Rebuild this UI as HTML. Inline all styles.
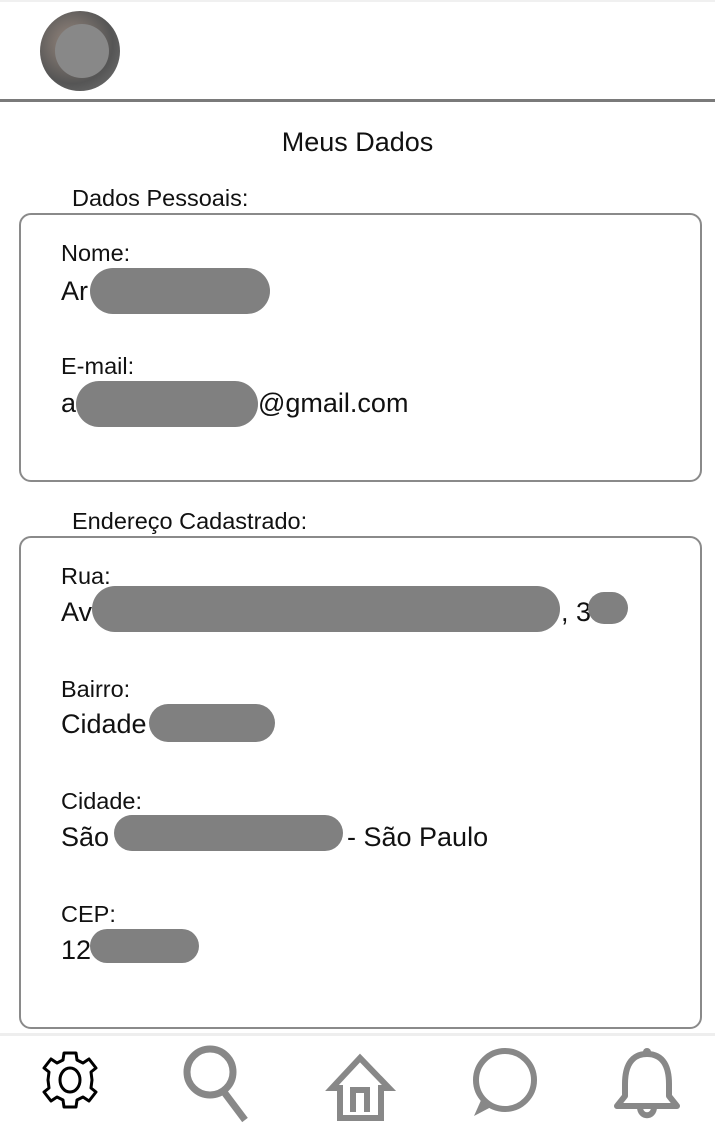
<!DOCTYPE html>
<html><head><meta charset="utf-8"><style>
*{margin:0;padding:0;box-sizing:border-box}
body{width:715px;height:1134px;background:#fff;position:relative;overflow:hidden;font-family:"Liberation Sans",Arial,sans-serif;color:#111}
.a{position:absolute;white-space:nowrap;line-height:1}
.l{font-size:23.5px}
.v{font-size:27px}
.b{position:absolute;background:#808080;border-radius:50%/50%}
.card{position:absolute;left:19px;width:683px;border:2px solid #8a8a8a;border-radius:12px}
</style></head><body>
<div style="position:absolute;left:0;top:0;width:715px;height:2px;background:#f0f0f0"></div>
<div style="position:absolute;left:40px;top:11px;width:80px;height:80px;border-radius:50%;background:radial-gradient(circle at 40% 40%,#9a8a80,#555 60%,#777)"></div>
<div style="position:absolute;left:55px;top:24px;width:54px;height:54px;border-radius:50%;background:#888"></div>
<div style="position:absolute;left:0;top:99px;width:715px;height:3px;background:#7a7a7a"></div>

<div class="a" style="left:0;width:715px;text-align:center;top:129px;font-size:27px">Meus Dados</div>

<div class="a l" style="left:72px;top:187px">Dados Pessoais:</div>
<div class="card" style="top:213px;height:269px"></div>
<div class="a l" style="left:61px;top:242px">Nome:</div>
<div class="a v" style="left:61px;top:278px">Ar</div>
<div class="b" style="left:90px;top:268px;width:180px;height:46px;border-radius:24px"></div>
<div class="a l" style="left:61px;top:355px">E-mail:</div>
<div class="a v" style="left:61px;top:390px">a</div>
<div class="b" style="left:76px;top:381px;width:182px;height:46px;border-radius:24px"></div>
<div class="a v" style="left:258px;top:390px">@gmail.com</div>

<div class="a l" style="left:72px;top:510px">Endereço Cadastrado:</div>
<div class="card" style="top:536px;height:493px"></div>
<div class="a l" style="left:61px;top:565px">Rua:</div>
<div class="a v" style="left:61px;top:599px">Av</div>
<div class="b" style="left:92px;top:586px;width:468px;height:46px;border-radius:24px"></div>
<div class="a v" style="left:561px;top:599px">, 3</div>
<div class="b" style="left:588px;top:592px;width:40px;height:32px;border-radius:16px"></div>
<div class="a l" style="left:61px;top:678px">Bairro:</div>
<div class="a v" style="left:61px;top:711px">Cidade</div>
<div class="b" style="left:149px;top:704px;width:126px;height:38px;border-radius:19px"></div>
<div class="a l" style="left:61px;top:790px">Cidade:</div>
<div class="a v" style="left:61px;top:824px">São</div>
<div class="b" style="left:114px;top:815px;width:229px;height:36px;border-radius:18px"></div>
<div class="a v" style="left:347px;top:824px">- São Paulo</div>
<div class="a l" style="left:61px;top:903px">CEP:</div>
<div class="a v" style="left:61px;top:937px">12</div>
<div class="b" style="left:90px;top:929px;width:109px;height:34px;border-radius:17px"></div>

<div style="position:absolute;left:0;top:1033px;width:715px;height:3px;background:#eee"></div>
<svg style="position:absolute;left:0;top:1036px" width="715" height="98" viewBox="0 0 715 98">
<g transform="translate(70,44)" fill="none" stroke="#000" stroke-width="3" stroke-linejoin="round">
<path d="M-6,-27 L6,-27 L7,-20 L13,-17 L19,-21 L26,-12 L21,-8 L22,0 L21,8 L26,12 L19,21 L13,17 L7,20 L6,27 L-6,27 L-7,20 L-13,17 L-19,21 L-26,12 L-21,8 L-22,0 L-21,-8 L-26,-12 L-19,-21 L-13,-17 L-7,-20 Z"/>
<ellipse cx="0" cy="0" rx="10" ry="12"/>
</g>
<g fill="none" stroke="#888" stroke-width="7">
<circle cx="210" cy="36" r="23"/>
<line x1="224" y1="56" x2="245" y2="84"/>
</g>
<path d="M360,22 L389,52 L381,52 L381,82 L340,82 L340,52 L332,52 Z M353,76 L353,54 L367,54 L367,76" fill="none" stroke="#888" stroke-width="6" stroke-linejoin="miter"/>
<g fill="none" stroke="#888" stroke-width="6">
<circle cx="505" cy="44" r="29"/>
</g>
<path d="M482,62 L474,80 L493,70 Z" fill="#888"/>
<g fill="none" stroke="#888" stroke-width="6" stroke-linejoin="round">
<circle cx="647" cy="16" r="4" fill="#888" stroke="none"/>
<path d="M647,18 C630,18 625,32 625,48 L625,60 L617,70 L677,70 L669,60 L669,48 C669,32 664,18 647,18 Z"/>
<path d="M640,71 C640,82 654,82 654,71"/>
</g>
</svg>
</body></html>
